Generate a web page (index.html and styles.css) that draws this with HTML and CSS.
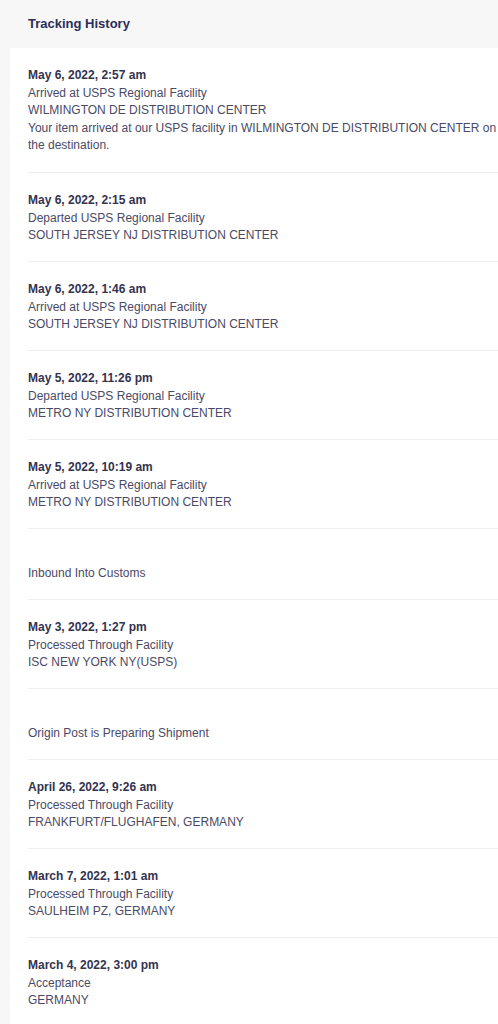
FILE: index.html
```html
<!DOCTYPE html>
<html lang="en">
<head>
<meta charset="utf-8">
<title>Tracking History</title>
<link rel="stylesheet" href="styles.css">
</head>
<body>
<div class="page">
  <h2 class="title">Tracking History</h2>
  <div class="card">
    <div class="event">
      <div class="date">May 6, 2022, 2:57 am</div>
      <div class="line">Arrived at USPS Regional Facility</div>
      <div class="line">WILMINGTON DE DISTRIBUTION CENTER</div>
      <div class="line">Your item arrived at our USPS facility in WILMINGTON DE DISTRIBUTION CENTER on the destination.</div>
    </div>
    <div class="event">
      <div class="date">May 6, 2022, 2:15 am</div>
      <div class="line">Departed USPS Regional Facility</div>
      <div class="line">SOUTH JERSEY NJ DISTRIBUTION CENTER</div>
    </div>
    <div class="event">
      <div class="date">May 6, 2022, 1:46 am</div>
      <div class="line">Arrived at USPS Regional Facility</div>
      <div class="line">SOUTH JERSEY NJ DISTRIBUTION CENTER</div>
    </div>
    <div class="event">
      <div class="date">May 5, 2022, 11:26 pm</div>
      <div class="line">Departed USPS Regional Facility</div>
      <div class="line">METRO NY DISTRIBUTION CENTER</div>
    </div>
    <div class="event">
      <div class="date">May 5, 2022, 10:19 am</div>
      <div class="line">Arrived at USPS Regional Facility</div>
      <div class="line">METRO NY DISTRIBUTION CENTER</div>
    </div>
    <div class="event">
      <div class="date date-empty"></div>
      <div class="line">Inbound Into Customs</div>
    </div>
    <div class="event">
      <div class="date">May 3, 2022, 1:27 pm</div>
      <div class="line">Processed Through Facility</div>
      <div class="line">ISC NEW YORK NY(USPS)</div>
    </div>
    <div class="event">
      <div class="date date-empty"></div>
      <div class="line">Origin Post is Preparing Shipment</div>
    </div>
    <div class="event">
      <div class="date">April 26, 2022, 9:26 am</div>
      <div class="line">Processed Through Facility</div>
      <div class="line">FRANKFURT/FLUGHAFEN, GERMANY</div>
    </div>
    <div class="event">
      <div class="date">March 7, 2022, 1:01 am</div>
      <div class="line">Processed Through Facility</div>
      <div class="line">SAULHEIM PZ, GERMANY</div>
    </div>
    <div class="event">
      <div class="date">March 4, 2022, 3:00 pm</div>
      <div class="line">Acceptance</div>
      <div class="line">GERMANY</div>
    </div>
  </div>
</div>
</body>
</html>
```

FILE: styles.css
```css
html, body {
  margin: 0;
  padding: 0;
  background: #f7f7f8;
  overflow-x: hidden;
}

body {
  font-family: "Liberation Sans", Arial, sans-serif;
  color: #4a4a66;
}

.page {
  width: 516px;
  padding-left: 10px;
}

.title {
  margin: 0;
  height: 48px;
  box-sizing: border-box;
  padding: 15px 0 0 18px;
  font-size: 13px;
  font-weight: bold;
  line-height: 17px;
  color: #2d2d58;
}

.card {
  background: #ffffff;
  padding: 0 18px 0 18px;
  min-height: 980px;
}

.event {
  padding: 19px 0 16.5px;
  border-bottom: 1px solid #eeeef1;
}

.event:first-child {
  padding-bottom: 17.5px;
}

.date {
  font-size: 12px;
  font-weight: bold;
  line-height: 17.5px;
  color: #33334f;
}

.date-empty {
  height: 17px;
}

.line {
  font-size: 12px;
  line-height: 17.5px;
  color: #4a4a66;
}
```
